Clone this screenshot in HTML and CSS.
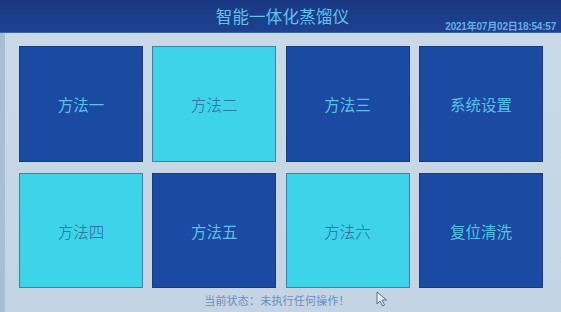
FILE: index.html
```html
<!DOCTYPE html>
<html lang="zh-CN">
<head>
    <meta charset="UTF-8">
    <meta name="viewport" content="width=device-width, initial-scale=1.0">
    <title>智能一体化蒸馏仪</title>
    <link rel="stylesheet" href="styles.css">
</head>
<body>
    <header class="topbar">
        <h1 class="title">智能一体化蒸馏仪</h1>
        <span class="clock">2021年07月02日18:54:57</span>
    </header>

    <main class="panel">
        <div class="grid">
            <button class="tile dark">方法一</button>
            <button class="tile light">方法二</button>
            <button class="tile dark">方法三</button>
            <button class="tile dark">系统设置</button>
            <button class="tile light">方法四</button>
            <button class="tile dark">方法五</button>
            <button class="tile light">方法六</button>
            <button class="tile dark">复位清洗</button>
        </div>
        <p class="status">当前状态：未执行任何操作！</p>

        <!-- mouse pointer sitting on the screen -->
        <svg class="cursor" width="12" height="16" viewBox="0 0 12 16">
            <path d="M1 1 L1 13 L4 10 L6.5 15 L8.5 14 L6 9 L10.5 9 Z" fill="#e8eef5" stroke="#5a6f88" stroke-width="1"/>
        </svg>
    </main>
</body>
</html>
```

FILE: styles.css
```css
/* Overall screen */
body {
    margin: 0;
    width: 561px;
    height: 312px;
    overflow: hidden;
    font-family: "Noto Sans CJK SC", "Noto Sans", sans-serif;
    background: #c8d7e6;
}

/* Title bar */
.topbar {
    position: relative;
    height: 33px;
    background: linear-gradient(to bottom, #1a3883, #1d4291);
    border-bottom: 1px solid #3a64a8;
    box-sizing: border-box;
    display: flex;
    justify-content: center;
    align-items: center;
}

.title {
    margin: 0 0 0 4px;
    font-size: 16.5px;
    font-weight: normal;
    color: #5cc6ea;
    letter-spacing: 0.2px;
}

.clock {
    position: absolute;
    right: 5px;
    top: 18px;
    font-family: "Liberation Sans", "Noto Sans CJK SC", sans-serif;
    font-size: 10px;
    font-weight: bold;
    color: #66ade2;
    letter-spacing: -0.2px;
}

/* Button area */
.panel {
    position: relative;
    height: 279px;
    border-left: 5px solid #a9bdd3;
    box-sizing: border-box;
    padding: 13px 0 0 14px;
    background: linear-gradient(to bottom, #cad9e7, #c4d4e4);
}

.grid {
    display: grid;
    grid-template-columns: repeat(4, 124px);
    grid-template-rows: 116px 115px;
    column-gap: 9.3px;
    row-gap: 11px;
}

.tile {
    margin: 0;
    padding: 0;
    font-family: inherit;
    font-size: 15.5px;
    cursor: pointer;
    border: 1px solid #2d5f8f;
}

.tile.dark {
    background: #1a4aa2;
    color: #56c3e6;
    border-color: #1a3c7e;
}

.tile.light {
    background: #3dd4ea;
    color: #33649a;
    font-weight: 300;
    border-color: #3f7faa;
}

.status {
    margin: 4px 26px 0 0;
    text-align: center;
    font-size: 11px;
    color: #6a8fc0;
    letter-spacing: 0.2px;
}

.cursor {
    position: absolute;
    left: 371px;
    top: 258px;
}
```
